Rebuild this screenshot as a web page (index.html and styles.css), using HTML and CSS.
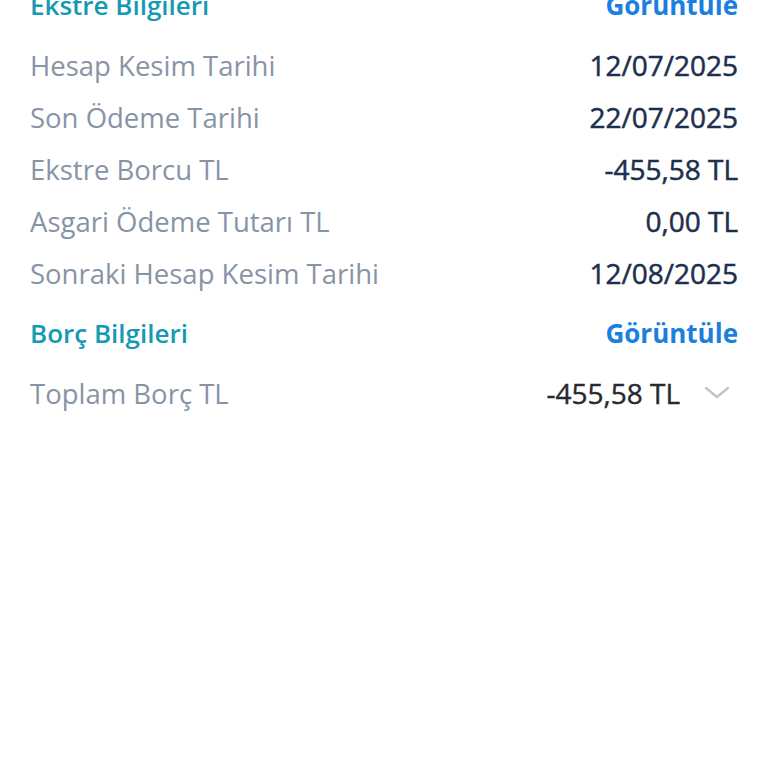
FILE: index.html
```html
<!DOCTYPE html>
<html lang="tr">
<head>
<meta charset="utf-8">
<link rel="stylesheet" href="styles.css">
</head>
<body>
<div class="page">
  <section class="section first">
    <div class="section-head">
      <span class="section-title">Ekstre Bilgileri</span>
      <a class="section-link">Görüntüle</a>
    </div>
    <div class="row"><span class="label">Hesap Kesim Tarihi</span><span class="value">12/07/2025</span></div>
    <div class="row"><span class="label">Son Ödeme Tarihi</span><span class="value">22/07/2025</span></div>
    <div class="row"><span class="label">Ekstre Borcu TL</span><span class="value">-455,58 TL</span></div>
    <div class="row"><span class="label">Asgari Ödeme Tutarı TL</span><span class="value">0,00 TL</span></div>
    <div class="row"><span class="label">Sonraki Hesap Kesim Tarihi</span><span class="value">12/08/2025</span></div>
  </section>
  <section class="section">
    <div class="section-head">
      <span class="section-title">Borç Bilgileri</span>
      <a class="section-link">Görüntüle</a>
    </div>
    <div class="row total">
      <span class="label">Toplam Borç TL</span>
      <span class="total-right">
        <span class="value dark">-455,58 TL</span>
        <svg class="chevron" width="26" height="14" viewBox="0 0 26 14"><path d="M2 2 L13 11 L24 2" fill="none" stroke="#c4c4c8" stroke-width="2.4" stroke-linecap="round" stroke-linejoin="round"/></svg>
      </span>
    </div>
  </section>
</div>
</body>
</html>
```
FILE: styles.css
```css
html, body {
  margin: 0;
  padding: 0;
  background: #ffffff;
}
body {
  font-family: "Open Sans", "Noto Sans", sans-serif;
  overflow: hidden;
}
.page {
  padding: 0 30px;
  margin-top: -21px;
}
.section {
  margin-top: 8px;
}
.section.first {
  margin-top: 0;
}
.section-head {
  display: flex;
  justify-content: space-between;
  align-items: baseline;
  height: 52px;
  line-height: 52px;
  font-size: 26px;
  margin-bottom: 8px;
}
.section-title {
  color: #1599b4;
  font-weight: 600;
}
.section-link {
  color: #1a7fdf;
  font-weight: 700;
}
.row {
  display: flex;
  justify-content: space-between;
  align-items: baseline;
  height: 52px;
  line-height: 52px;
  font-size: 27.5px;
}
.row.total {
  margin-top: 7px;
}
.label {
  color: #8794a6;
  font-weight: 400;
}
.value {
  color: #1d2f4e;
  font-weight: 400;
  font-size: 28px;
  -webkit-text-stroke: 0.5px #1d2f4e;
}
.value.dark {
  color: #262a30;
  -webkit-text-stroke: 0.4px #262a30;
}
.total-right {
  display: flex;
  align-items: center;
  gap: 24px;
}
.chevron {
  margin-right: 8px;
  display: block;
}
```
